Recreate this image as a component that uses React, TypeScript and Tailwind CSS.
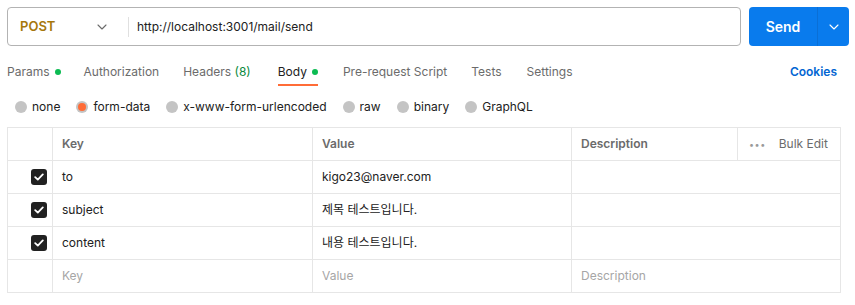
import React from "react";

const font = { fontFamily: 'Inter, "Noto Sans CJK KR", sans-serif' };

function Chevron({ className = "" }: { className?: string }) {
  return (
    <svg width="10" height="6" viewBox="0 0 10 6" className={className} fill="none">
      <path d="M1 1l4 4 4-4" stroke="currentColor" strokeWidth="1.1" strokeLinecap="round" strokeLinejoin="round" />
    </svg>
  );
}

function Dot() {
  return <span className="inline-block w-[6px] h-[6px] rounded-full bg-[#0cbb52] ml-[5px]" />;
}

function Check() {
  return (
    <span className="w-[16px] h-[16px] rounded-[3px] bg-[#212121] flex items-center justify-center">
      <svg width="10" height="8" viewBox="0 0 10 8" fill="none">
        <path d="M1.2 4.2l2.6 2.4L8.8 1.4" stroke="white" strokeWidth="1.8" strokeLinecap="round" strokeLinejoin="round" />
      </svg>
    </span>
  );
}

function Radio({ label, active }: { label: string; active?: boolean }) {
  return (
    <div className="flex items-center gap-[5px]">
      <span className="w-[12px] h-[12px] rounded-full bg-[#c4c4c4] flex items-center justify-center">
        {active && <span className="w-[8px] h-[8px] rounded-full bg-[#ff6c37]" />}
      </span>
      <span className="text-[12px] text-[#212121]">{label}</span>
    </div>
  );
}

const rows = [
  { k: "to", v: "kigo23@naver.com" },
  { k: "subject", v: "제목 테스트입니다." },
  { k: "content", v: "내용 테스트입니다." },
];

export default function App() {
  return (
    <div className="w-[855px] h-[305px] bg-white overflow-hidden" style={font}>
      <div className="flex pt-[7px] pl-[7px] gap-[8px]">
        <div className="w-[734px] h-[39px] border border-[#b3b3b3] rounded-[4px] flex items-center">
          <div className="w-[120px] flex items-center pl-[12px] pr-[12px] justify-between">
            <span className="text-[13px] font-semibold text-[#a6770b]">POST</span>
            <Chevron className="text-[#6b6b6b] mr-[9px]" />
          </div>
          <div className="w-px h-[20px] bg-[#e0e0e0]" />
          <span className="ml-[8px] text-[12px] text-[#212121]">http://localhost:3001/mail/send</span>
        </div>
        <div className="w-[100px] h-[39px] rounded-[4px] bg-[#097bed] flex overflow-hidden">
          <div className="w-[68px] flex items-center justify-center text-white font-semibold text-[14px]">Send</div>
          <div className="w-px bg-[#0a6fd6]" />
          <div className="flex-1 flex items-center justify-center text-white">
            <Chevron />
          </div>
        </div>
      </div>

      <div className="flex items-center pl-[7px] pr-[18px] h-[42px] pt-[10px] text-[12px]">
        <div className="flex items-center">
          <div className="flex items-center text-[#6b6b6b]">Params<Dot /></div>
          <div className="ml-[23px] text-[#6b6b6b]">Authorization</div>
          <div className="ml-[24px] text-[#6b6b6b]">Headers <span className="text-[#0b8a3e]">(8)</span></div>
          <div className="ml-[27px] relative flex items-center text-[#212121]">
            Body<Dot />
            <span className="absolute left-0 right-0 top-[21px] h-[2px] bg-[#ff6c37]" />
          </div>
          <div className="ml-[25px] text-[#6b6b6b]">Pre-request Script</div>
          <div className="ml-[24px] text-[#6b6b6b]">Tests</div>
          <div className="ml-[25px] text-[#6b6b6b]">Settings</div>
        </div>
        <div className="ml-auto text-[#0265d2] font-semibold text-[12px]">Cookies</div>
      </div>

      <div className="flex items-center gap-[16px] pl-[15px] h-[38px]">
        <Radio label="none" />
        <Radio label="form-data" active />
        <Radio label="x-www-form-urlencoded" />
        <Radio label="raw" />
        <Radio label="binary" />
        <Radio label="GraphQL" />
      </div>

      <div className="ml-[7px] mt-[1px] w-[834px] border border-[#e6e6e6] text-[12px]">
        <div className="flex h-[33px] border-b border-[#e6e6e6] font-semibold text-[#6b6b6b]">
          <div className="w-[45px] border-r border-[#e6e6e6]" />
          <div className="w-[260px] border-r border-[#e6e6e6] flex items-center pl-[9px]">Key</div>
          <div className="w-[259px] border-r border-[#e6e6e6] flex items-center pl-[9px]">Value</div>
          <div className="w-[166px] border-r border-[#e6e6e6] flex items-center pl-[9px]">Description</div>
          <div className="flex-1 flex items-center pl-[11px] gap-[13px] font-normal">
            <span className="text-[#9a9a9a] tracking-[0.5px] text-[9px] leading-none">•••</span>
            <span className="text-[#6b6b6b]">Bulk Edit</span>
          </div>
        </div>
        {rows.map((r) => (
          <div key={r.k} className="flex h-[33px] border-b border-[#e6e6e6] text-[#212121]">
            <div className="w-[45px] border-r border-[#e6e6e6] flex items-center justify-end pr-[5px]">
              <Check />
            </div>
            <div className="w-[260px] border-r border-[#e6e6e6] flex items-center pl-[9px]">{r.k}</div>
            <div className="w-[259px] border-r border-[#e6e6e6] flex items-center pl-[9px]">{r.v}</div>
            <div className="flex-1" />
          </div>
        ))}
        <div className="flex h-[32px] text-[#a6a6a6]">
          <div className="w-[45px] border-r border-[#e6e6e6]" />
          <div className="w-[260px] border-r border-[#e6e6e6] flex items-center pl-[9px]">Key</div>
          <div className="w-[259px] border-r border-[#e6e6e6] flex items-center pl-[9px]">Value</div>
          <div className="flex-1 flex items-center pl-[9px]">Description</div>
        </div>
      </div>
    </div>
  );
}
